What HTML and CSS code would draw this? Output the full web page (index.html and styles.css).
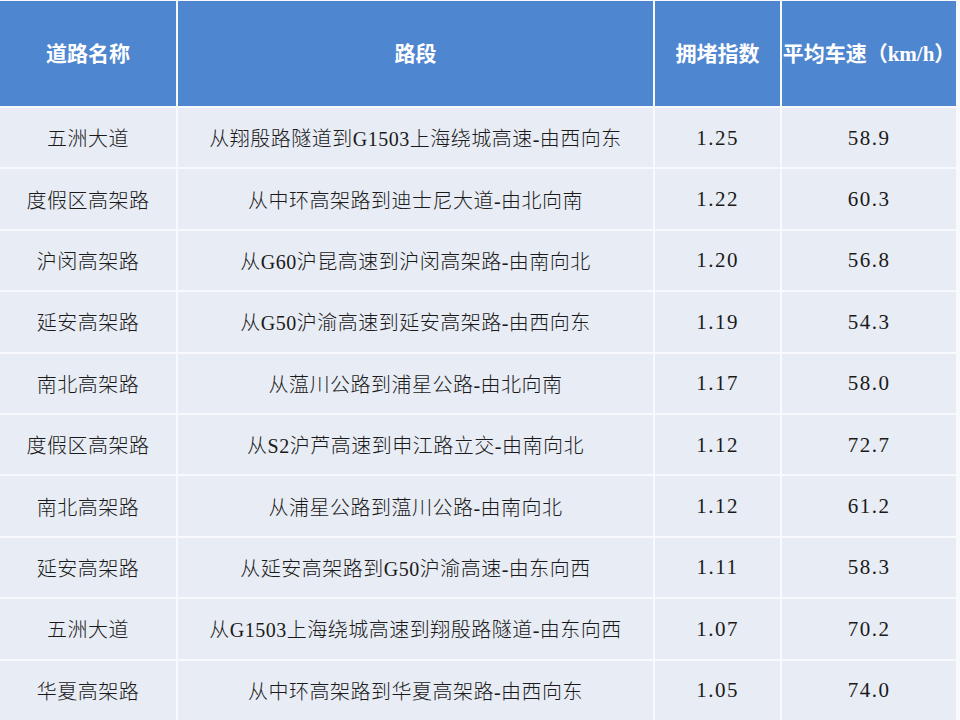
FILE: index.html
```html
<!DOCTYPE html>
<html lang="zh-CN">
<head>
<meta charset="utf-8">
<title>道路拥堵指数</title>
<link rel="stylesheet" href="styles.css">
</head>
<body>
<div class="grid">
  <div class="cell head">道路名称</div>
  <div class="cell head">路段</div>
  <div class="cell head">拥堵指数</div>
  <div class="cell head">平均车速（km/h）</div>

  <div class="cell">五洲大道</div>
  <div class="cell">从翔殷路隧道到G1503上海绕城高速-由西向东</div>
  <div class="cell num">1.25</div>
  <div class="cell num">58.9</div>

  <div class="cell">度假区高架路</div>
  <div class="cell">从中环高架路到迪士尼大道-由北向南</div>
  <div class="cell num">1.22</div>
  <div class="cell num">60.3</div>

  <div class="cell">沪闵高架路</div>
  <div class="cell">从G60沪昆高速到沪闵高架路-由南向北</div>
  <div class="cell num">1.20</div>
  <div class="cell num">56.8</div>

  <div class="cell">延安高架路</div>
  <div class="cell">从G50沪渝高速到延安高架路-由西向东</div>
  <div class="cell num">1.19</div>
  <div class="cell num">54.3</div>

  <div class="cell">南北高架路</div>
  <div class="cell">从蕰川公路到浦星公路-由北向南</div>
  <div class="cell num">1.17</div>
  <div class="cell num">58.0</div>

  <div class="cell">度假区高架路</div>
  <div class="cell">从S2沪芦高速到申江路立交-由南向北</div>
  <div class="cell num">1.12</div>
  <div class="cell num">72.7</div>

  <div class="cell">南北高架路</div>
  <div class="cell">从浦星公路到蕰川公路-由南向北</div>
  <div class="cell num">1.12</div>
  <div class="cell num">61.2</div>

  <div class="cell">延安高架路</div>
  <div class="cell">从延安高架路到G50沪渝高速-由东向西</div>
  <div class="cell num">1.11</div>
  <div class="cell num">58.3</div>

  <div class="cell">五洲大道</div>
  <div class="cell">从G1503上海绕城高速到翔殷路隧道-由东向西</div>
  <div class="cell num">1.07</div>
  <div class="cell num">70.2</div>

  <div class="cell">华夏高架路</div>
  <div class="cell">从中环高架路到华夏高架路-由西向东</div>
  <div class="cell num">1.05</div>
  <div class="cell num">74.0</div>
</div>
</body>
</html>
```

FILE: styles.css
```css
html, body {
  margin: 0;
  padding: 0;
  background: #ffffff;
}

.grid {
  display: grid;
  grid-template-columns: 176px 475px 125px 174px;
  grid-template-rows: 105px repeat(10, 1fr);
  column-gap: 2px;
  row-gap: 2px;
  height: 720px;
  padding: 1px 0 0 0;
  box-sizing: border-box;
  width: 960px;
  background: #f7f9fc;
  font-family: "Liberation Serif", "Noto Sans CJK SC", serif;
}

.cell {
  display: flex;
  align-items: center;
  justify-content: center;
  background: #e8ecf4;
  color: #1a1a1a;
  font-size: 20px;
  font-weight: 300;
  letter-spacing: 0.5px;
  white-space: nowrap;
}

.num {
  font-size: 21px;
  letter-spacing: 1.5px;
  padding-top: 1px;
}

.head {
  background: #4f86d0;
  color: #ffffff;
  font-size: 21px;
  font-weight: 700;
  letter-spacing: 0;
  padding-bottom: 3px;
}
```
